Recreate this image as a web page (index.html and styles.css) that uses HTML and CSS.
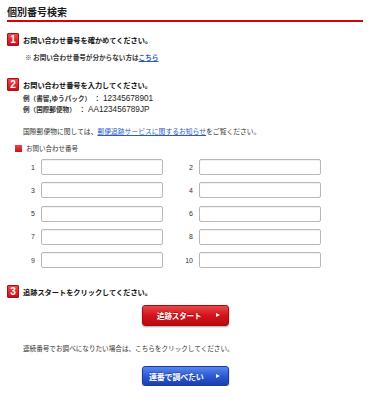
FILE: index.html
```html
<!DOCTYPE html>
<html lang="ja">
<head>
<meta charset="utf-8">
<title>個別番号検索</title>
<link rel="stylesheet" href="styles.css">
</head>
<body>
<div class="page">
  <h1 class="title">個別番号検索</h1>

  <div class="step-head step1"><span class="badge">1</span><span class="step-text">お問い合わせ番号を確かめてください。</span></div>
  <p class="note">※ お問い合わせ番号が分からない方は<a href="#" class="link">こちら</a></p>

  <div class="step-head step2"><span class="badge">2</span><span class="step-text">お問い合わせ番号を入力してください。</span></div>
  <div class="examples">
    <div class="ex"><span class="ex-k ex-k1">例（書留,ゆうパック）</span><span class="ex-c">：</span><span class="ex-v">12345678901</span></div>
    <div class="ex"><span class="ex-k ex-k2">例（国際郵便物）</span><span class="ex-c">：</span><span class="ex-v">AA123456789JP</span></div>
  </div>
  <p class="intl">国際郵便物に関しては、<a href="#" class="link">郵便追跡サービスに関するお知らせ</a>をご覧ください。</p>

  <div class="field-label"><span class="sq"></span><span>お問い合わせ番号</span></div>
  <div class="grid">
    <span class="num">1</span><input class="inp" type="text">
    <span class="num">2</span><input class="inp" type="text">
    <span class="num">3</span><input class="inp" type="text">
    <span class="num">4</span><input class="inp" type="text">
    <span class="num">5</span><input class="inp" type="text">
    <span class="num">6</span><input class="inp" type="text">
    <span class="num">7</span><input class="inp" type="text">
    <span class="num">8</span><input class="inp" type="text">
    <span class="num">9</span><input class="inp" type="text">
    <span class="num">10</span><input class="inp" type="text">
  </div>

  <div class="step-head step3"><span class="badge">3</span><span class="step-text">追跡スタートをクリックしてください。</span></div>
  <div class="btn-row btn-row-red">
    <a href="#" class="btn btn-red"><span class="btn-label">追跡スタート</span><span class="tri"></span></a>
  </div>

  <p class="serial">連続番号でお調べになりたい場合は、こちらをクリックしてください。</p>
  <div class="btn-row btn-row-blue">
    <a href="#" class="btn btn-blue"><span class="btn-label">連番で調べたい</span><span class="tri"></span></a>
  </div>
</div>
</body>
</html>
```

FILE: styles.css
```css
* { box-sizing: border-box; }
html, body { margin: 0; padding: 0; background: #fff; }
body {
  font-family: "Noto Sans CJK JP", "Noto Sans", sans-serif;
  color: #222;
}
.page { width: 370px; padding: 0 7px; }

.title {
  margin: 0;
  padding-top: 4px;
  height: 22px;
  line-height: 16px;
  font-size: 10px;
  font-weight: bold;
  color: #1a1a1a;
  border-bottom: 2px solid #d9000d;
}

.step-head {
  display: flex;
  align-items: center;
  height: 13px;
}
.step1 { margin-top: 11px; }
.step2 { margin-top: 16px; }
.step3 { margin-top: 17px; }
.badge {
  width: 12px;
  height: 13px;
  flex: none;
  display: flex;
  align-items: center;
  justify-content: center;
  background: linear-gradient(#ec4a4a, #c8101a);
  border: 1px solid #b50a12;
  border-radius: 1px;
  color: #fff;
  font-family: "Liberation Sans", Arial, sans-serif;
  font-weight: bold;
  font-size: 10px;
  line-height: 1;
}
.step-text {
  margin-left: 4px;
  font-size: 7.2px;
  font-weight: bold;
  color: #111;
  white-space: nowrap;
}

.note {
  margin: 6px 0 0 18px;
  line-height: 10px;
  font-size: 6.6px;
  font-weight: bold;
  color: #333;
  white-space: nowrap;
}
.link { color: #2a5bc0; text-decoration: underline; }

.examples { margin: 2px 0 0 16px; }
.ex {
  display: flex;
  align-items: baseline;
  line-height: 10px;
  font-size: 6.6px;
  font-weight: bold;
  color: #333;
  white-space: nowrap;
}
.ex-k1 { width: 71px; }
.ex-k2 { width: 56px; }
.ex-c { width: 9px; }
.ex-v {
  font-family: "Liberation Sans", Arial, sans-serif;
  font-size: 8.2px;
  font-weight: normal;
  color: #222;
}

.intl {
  margin: 11px 0 0 16px;
  line-height: 10px;
  font-size: 6.8px;
  color: #333;
  white-space: nowrap;
}

.field-label {
  margin: 7px 0 0 8px;
  display: flex;
  align-items: center;
  height: 10px;
  font-size: 6.5px;
  color: #333;
}
.sq {
  width: 7px;
  height: 7px;
  margin-right: 4px;
  background: linear-gradient(#ee4545, #c8101a);
}

.grid {
  margin: 6px 0 0 8px;
  display: grid;
  grid-template-columns: 20px 122px 24px 122px;
  column-gap: 6px;
  row-gap: 7.3px;
  align-items: center;
}
.num {
  text-align: right;
  font-family: "Liberation Sans", Arial, sans-serif;
  font-size: 7px;
  color: #333;
}
.inp {
  margin: 0;
  width: 100%;
  min-width: 0;
  height: 16px;
  border: 1px solid #b8b8b8;
  border-radius: 2px;
  background: #fff;
  box-shadow: inset 0 1px 1px rgba(0,0,0,0.06);
  padding: 0;
  font-size: 8px;
}

.btn-row { display: flex; justify-content: center; }
.btn-row-red { margin-top: 7px; }
.btn-row-blue { margin-top: 13px; }
.btn {
  position: relative;
  display: flex;
  align-items: center;
  width: 87px;
  height: 21px;
  border-radius: 3px;
  text-decoration: none;
  color: #fff;
  box-shadow: 0 1px 2px rgba(0,0,0,0.35);
}
.btn-red {
  margin-left: 1px;
  background: linear-gradient(#e94848, #d4121b 50%, #b90a10);
  border: 1px solid #a80a10;
}
.btn-blue {
  margin-left: 1px;
  height: 20px;
  background: linear-gradient(#5a86ea, #2a5bd6 50%, #1a3fae);
  border: 1px solid #1a3a9e;
}
.btn-label {
  margin-left: 14px;
  font-size: 7.6px;
  font-weight: bold;
  letter-spacing: -0.2px;
  white-space: nowrap;
  text-shadow: 0 -1px 0 rgba(0,0,0,0.25);
}
.btn-blue .btn-label { margin-left: 6px; font-size: 8px; }
.tri {
  position: absolute;
  right: 8px;
  top: 50%;
  margin-top: -2.5px;
  width: 0;
  height: 0;
  border-left: 4px solid #fff;
  border-top: 2.5px solid transparent;
  border-bottom: 2.5px solid transparent;
}

.serial {
  margin: 17px 0 0 16px;
  line-height: 10px;
  font-size: 6.6px;
  color: #333;
  white-space: nowrap;
}
```
